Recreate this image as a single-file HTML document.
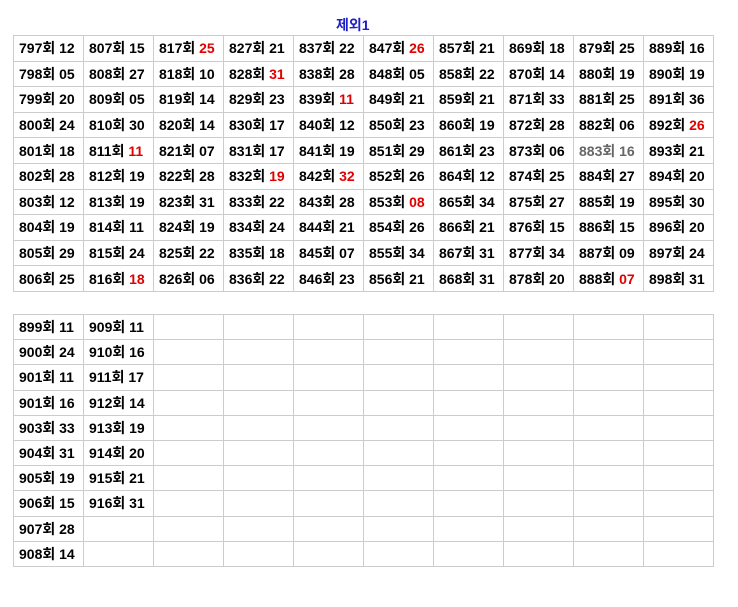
<!DOCTYPE html>
<html><head><meta charset="utf-8"><style>
body{margin:0;background:#fff;font-family:"Liberation Sans","Noto Sans CJK KR",sans-serif;}
.t{position:absolute;left:13px;width:701px;border-collapse:collapse;table-layout:fixed;}
.t td{border:1px solid #ccc;padding:0 0 0 5px;font-size:14px;font-weight:bold;color:#000;white-space:nowrap;box-sizing:border-box;}
.a td{height:25.6px}.b td{height:25.2px}
.r{color:#e00000}.t td.g{color:#666}
#title{position:absolute;left:336px;top:15px;font-size:14px;font-weight:bold;color:#2020c8;}
</style></head><body>
<div id="title">제외1</div>
<table class="t a" style="top:35px">
<tr><td>797회 12</td><td>807회 15</td><td>817회 <span class="r">25</span></td><td>827회 21</td><td>837회 22</td><td>847회 <span class="r">26</span></td><td>857회 21</td><td>869회 18</td><td>879회 25</td><td>889회 16</td></tr>
<tr><td>798회 05</td><td>808회 27</td><td>818회 10</td><td>828회 <span class="r">31</span></td><td>838회 28</td><td>848회 05</td><td>858회 22</td><td>870회 14</td><td>880회 19</td><td>890회 19</td></tr>
<tr><td>799회 20</td><td>809회 05</td><td>819회 14</td><td>829회 23</td><td>839회 <span class="r">11</span></td><td>849회 21</td><td>859회 21</td><td>871회 33</td><td>881회 25</td><td>891회 36</td></tr>
<tr><td>800회 24</td><td>810회 30</td><td>820회 14</td><td>830회 17</td><td>840회 12</td><td>850회 23</td><td>860회 19</td><td>872회 28</td><td>882회 06</td><td>892회 <span class="r">26</span></td></tr>
<tr><td>801회 18</td><td>811회 <span class="r">11</span></td><td>821회 07</td><td>831회 17</td><td>841회 19</td><td>851회 29</td><td>861회 23</td><td>873회 06</td><td class="g">883회 16</td><td>893회 21</td></tr>
<tr><td>802회 28</td><td>812회 19</td><td>822회 28</td><td>832회 <span class="r">19</span></td><td>842회 <span class="r">32</span></td><td>852회 26</td><td>864회 12</td><td>874회 25</td><td>884회 27</td><td>894회 20</td></tr>
<tr><td>803회 12</td><td>813회 19</td><td>823회 31</td><td>833회 22</td><td>843회 28</td><td>853회 <span class="r">08</span></td><td>865회 34</td><td>875회 27</td><td>885회 19</td><td>895회 30</td></tr>
<tr><td>804회 19</td><td>814회 11</td><td>824회 19</td><td>834회 24</td><td>844회 21</td><td>854회 26</td><td>866회 21</td><td>876회 15</td><td>886회 15</td><td>896회 20</td></tr>
<tr><td>805회 29</td><td>815회 24</td><td>825회 22</td><td>835회 18</td><td>845회 07</td><td>855회 34</td><td>867회 31</td><td>877회 34</td><td>887회 09</td><td>897회 24</td></tr>
<tr><td>806회 25</td><td>816회 <span class="r">18</span></td><td>826회 06</td><td>836회 22</td><td>846회 23</td><td>856회 21</td><td>868회 31</td><td>878회 20</td><td>888회 <span class="r">07</span></td><td>898회 31</td></tr>
</table>
<table class="t b" style="top:314px">
<tr><td>899회 11</td><td>909회 11</td><td></td><td></td><td></td><td></td><td></td><td></td><td></td><td></td></tr>
<tr><td>900회 24</td><td>910회 16</td><td></td><td></td><td></td><td></td><td></td><td></td><td></td><td></td></tr>
<tr><td>901회 11</td><td>911회 17</td><td></td><td></td><td></td><td></td><td></td><td></td><td></td><td></td></tr>
<tr><td>901회 16</td><td>912회 14</td><td></td><td></td><td></td><td></td><td></td><td></td><td></td><td></td></tr>
<tr><td>903회 33</td><td>913회 19</td><td></td><td></td><td></td><td></td><td></td><td></td><td></td><td></td></tr>
<tr><td>904회 31</td><td>914회 20</td><td></td><td></td><td></td><td></td><td></td><td></td><td></td><td></td></tr>
<tr><td>905회 19</td><td>915회 21</td><td></td><td></td><td></td><td></td><td></td><td></td><td></td><td></td></tr>
<tr><td>906회 15</td><td>916회 31</td><td></td><td></td><td></td><td></td><td></td><td></td><td></td><td></td></tr>
<tr><td>907회 28</td><td></td><td></td><td></td><td></td><td></td><td></td><td></td><td></td><td></td></tr>
<tr><td>908회 14</td><td></td><td></td><td></td><td></td><td></td><td></td><td></td><td></td><td></td></tr>
</table>
</body></html>
